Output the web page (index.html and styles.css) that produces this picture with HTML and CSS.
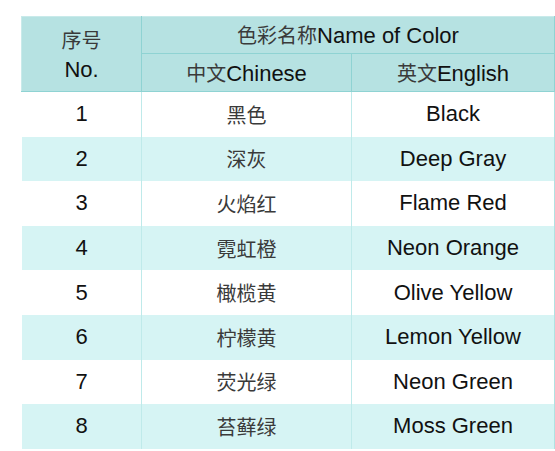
FILE: index.html
```html
<!DOCTYPE html>
<html lang="zh-CN">
<head>
<meta charset="utf-8">
<title>色彩名称</title>
<link rel="stylesheet" href="styles.css">
</head>
<body>
<table class="colors">
  <colgroup>
    <col class="c-no">
    <col class="c-zh">
    <col class="c-en">
  </colgroup>
  <thead>
    <tr class="h1">
      <th rowspan="2" class="no-head"><span class="zh">序号</span><br>No.</th>
      <th colspan="2"><span class="zh">色彩名称</span>Name of Color</th>
    </tr>
    <tr class="h2">
      <th><span class="zh">中文</span>Chinese</th>
      <th><span class="zh">英文</span>English</th>
    </tr>
  </thead>
  <tbody>
    <tr><td>1</td><td class="zh">黑色</td><td>Black</td></tr>
    <tr class="alt"><td>2</td><td class="zh">深灰</td><td>Deep Gray</td></tr>
    <tr><td>3</td><td class="zh">火焰红</td><td>Flame Red</td></tr>
    <tr class="alt"><td>4</td><td class="zh">霓虹橙</td><td>Neon Orange</td></tr>
    <tr><td>5</td><td class="zh">橄榄黄</td><td>Olive Yellow</td></tr>
    <tr class="alt"><td>6</td><td class="zh">柠檬黄</td><td>Lemon Yellow</td></tr>
    <tr><td>7</td><td class="zh">荧光绿</td><td>Neon Green</td></tr>
    <tr class="alt"><td>8</td><td class="zh">苔藓绿</td><td>Moss Green</td></tr>
  </tbody>
</table>
</body>
</html>
```
FILE: styles.css
```css
html, body {
  margin: 0;
  padding: 0;
  background: #ffffff;
}

body {
  padding: 16px 0 0 21px;
  font-family: "Liberation Sans", "Noto Sans CJK SC", sans-serif;
  font-size: 22px;
  color: #111111;
}

.colors {
  border-collapse: collapse;
  table-layout: fixed;
  width: 533px;
}

.c-no { width: 120px; }
.c-zh { width: 210px; }
.c-en { width: 203px; }

.colors th {
  background: #b6e2e2;
  font-weight: normal;
  text-align: center;
  padding: 0;
  border: 1px solid #8fd3d3;
  line-height: 29px;
}

.colors thead tr:first-child th {
  border-top-color: #c9eaea;
}

.colors th:first-child {
  border-left-color: #c9eaea;
}

.h1 th { height: 36px; }
.h2 th { height: 37px; }

.no-head {
  line-height: 29px;
}

.colors td {
  height: 44.6px;
  padding: 0;
  text-align: center;
  border-left: 1px solid #bfeaea;
  border-right: 1px solid #bfeaea;
}

.colors td:first-child {
  border-left-color: transparent;
}

.colors td:last-child {
  border-right-color: #b0e2e2;
}

.colors tbody tr.alt td {
  background: #d6f4f4;
}

.zh {
  font-family: "Noto Sans CJK SC", sans-serif;
  font-size: 20px;
  font-weight: 400;
  color: #3a3a3a;
}
```
